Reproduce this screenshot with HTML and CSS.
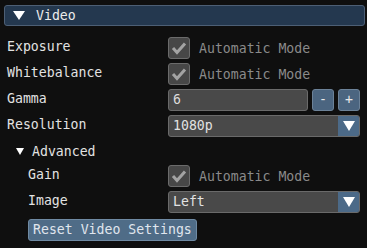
FILE: index.html
```html
<!DOCTYPE html>
<html lang="en">

<head>
    <meta charset="UTF-8">
    <title>Video Settings</title>
    <link rel="stylesheet" href="styles.css">
</head>

<body>
    <div class="panel">
        <!-- Collapsing header -->
        <div class="header">
            <svg class="arrow-big" width="12" height="9" viewBox="0 0 12 9"><polygon points="0,0 12,0 6,9" fill="#ffffff"/></svg>
            <span>Video</span>
        </div>

        <div class="rows">
            <div class="row">
                <span class="label">Exposure</span>
                <div class="ctrl">
                    <span class="checkbox"><svg width="22" height="22" viewBox="0 0 22 22"><polyline points="5,11 9,15.5 17,6.5" fill="none" stroke="#a3a3a3" stroke-width="3"/></svg></span>
                    <span class="check-label">Automatic Mode</span>
                </div>
            </div>
            <div class="row">
                <span class="label">Whitebalance</span>
                <div class="ctrl">
                    <span class="checkbox"><svg width="22" height="22" viewBox="0 0 22 22"><polyline points="5,11 9,15.5 17,6.5" fill="none" stroke="#a3a3a3" stroke-width="3"/></svg></span>
                    <span class="check-label">Automatic Mode</span>
                </div>
            </div>
            <div class="row">
                <span class="label">Gamma</span>
                <div class="ctrl">
                    <span class="input">6</span>
                    <span class="step">-</span>
                    <span class="step">+</span>
                </div>
            </div>
            <div class="row">
                <span class="label">Resolution</span>
                <div class="ctrl">
                    <span class="combo">
                        <span class="combo-text">1080p</span>
                        <span class="combo-arrow"><svg width="12" height="10" viewBox="0 0 12 10"><polygon points="0,0 12,0 6,10" fill="#ffffff"/></svg></span>
                    </span>
                </div>
            </div>

            <!-- Tree node -->
            <div class="tree">
                <svg class="arrow-small" width="8" height="7" viewBox="0 0 8 7"><polygon points="0,0 8,0 4,7" fill="#ffffff"/></svg>
                <span>Advanced</span>
            </div>

            <div class="row indent">
                <span class="label">Gain</span>
                <div class="ctrl">
                    <span class="checkbox"><svg width="22" height="22" viewBox="0 0 22 22"><polyline points="5,11 9,15.5 17,6.5" fill="none" stroke="#a3a3a3" stroke-width="3"/></svg></span>
                    <span class="check-label">Automatic Mode</span>
                </div>
            </div>
            <div class="row indent">
                <span class="label">Image</span>
                <div class="ctrl">
                    <span class="combo">
                        <span class="combo-text">Left</span>
                        <span class="combo-arrow"><svg width="12" height="10" viewBox="0 0 12 10"><polygon points="0,0 12,0 6,10" fill="#ffffff"/></svg></span>
                    </span>
                </div>
            </div>

            <div class="reset-row">
                <span class="button">Reset Video Settings</span>
            </div>
        </div>
    </div>
</body>

</html>
```

FILE: styles.css
```css
body {
    margin: 0;
    background-color: #0f0f0f;
    font-family: 'DejaVu Sans Mono', monospace;
    font-size: 13.2px;
    color: #e2e2e2;
}

.panel {
    padding: 5px 2px 0 4px;
}

.header {
    display: flex;
    align-items: center;
    height: 19px;
    border: 1px solid #4d5f75;
    border-radius: 3px;
    background-color: #24384f;
    padding-left: 8px;
    color: #ececec;
}

.arrow-big {
    margin-right: 11px;
}

.rows {
    display: flex;
    flex-direction: column;
    gap: 4px;
    padding-top: 11px;
    padding-left: 3px;
}

.row {
    display: flex;
    align-items: center;
    height: 22px;
}

.label {
    width: 161px;
    margin-top: -3px;
}

.indent .label {
    padding-left: 21px;
    width: 140px;
}

.ctrl {
    display: flex;
    align-items: center;
    gap: 4px;
    width: 192px;
}

.checkbox {
    display: block;
    width: 20px;
    height: 20px;
    border: 1px solid #6b6b6b;
    border-radius: 3px;
    background-color: #474747;
    overflow: hidden;
}

.checkbox svg {
    display: block;
    margin: -1px;
}

.check-label {
    color: #8a8a8a;
    margin-left: 5px;
}

.input {
    flex: 1;
    box-sizing: border-box;
    height: 22px;
    line-height: 20px;
    padding-left: 4px;
    border: 1px solid #6a6a6a;
    border-radius: 3px;
    background-color: #494949;
    color: #dcdcdc;
}

.step {
    box-sizing: border-box;
    width: 22px;
    height: 22px;
    line-height: 20px;
    text-align: center;
    border: 1px solid #6c8298;
    border-radius: 3px;
    background-color: #4b6580;
    color: #e8e8e8;
}

.combo {
    display: flex;
    box-sizing: border-box;
    width: 192px;
    height: 22px;
    border: 1px solid #6a6a6a;
    border-radius: 3px;
    background-color: #494949;
    overflow: hidden;
}

.combo-text {
    flex: 1;
    line-height: 20px;
    padding-left: 4px;
    color: #e2e2e2;
}

.combo-arrow {
    display: flex;
    align-items: center;
    justify-content: center;
    width: 21px;
    background-color: #4c6a88;
}

.tree {
    display: flex;
    align-items: center;
    height: 20px;
    padding-left: 9px;
}

.arrow-small {
    margin-right: 8px;
}

.reset-row {
    padding-left: 21px;
    margin-top: 2px;
}

.button {
    display: inline-block;
    box-sizing: border-box;
    height: 22px;
    line-height: 20px;
    padding: 0 4px;
    border: 1px solid #6f8aa3;
    border-radius: 3px;
    background-color: #4f6c87;
    color: #e0e6ee;
}
```
